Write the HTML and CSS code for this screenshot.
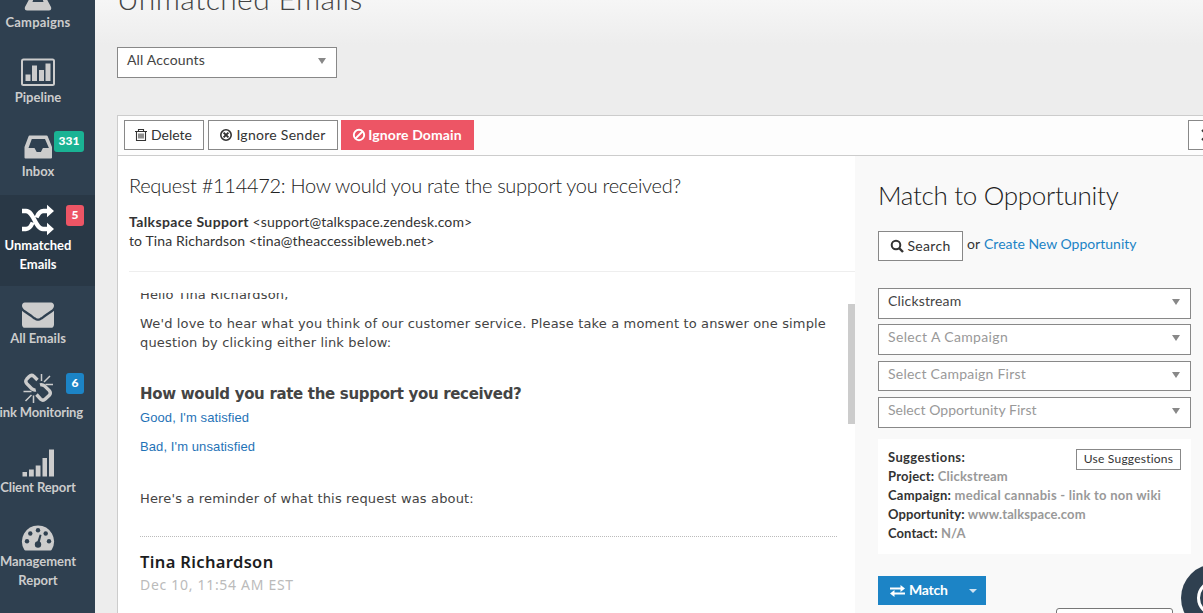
FILE: index.html
```html
<!DOCTYPE html>
<html lang="en">
<head>
<meta charset="utf-8">
<title>Unmatched Emails</title>
<link rel="stylesheet" href="styles.css">
</head>
<body>
<nav class="sidebar">
  <div class="nav-list">
    <a class="nav-item">
      <svg class="nav-icon" viewBox="0 0 34 34"><path fill-rule="evenodd" d="M12 2h10v9l8 15q1 3.500-2 3.500H6q-3 0-2-3.500l8-15zM15 9l-3.500 12h11L19 9z"/></svg>
      <span class="nav-label n1">Campaigns</span>
    </a>
    <a class="nav-item">
      <svg class="nav-icon" viewBox="0 0 34 34"><rect x="1" y="4.500" width="32" height="25.500" rx="1.500" fill="none" stroke="currentColor" stroke-width="2"/><path d="M4.500 19.500h5V26h-5zM11 10.500h5V26h-5zM18 15h5v11h-5zM24.500 8.500h5V26h-5z"/></svg>
      <span class="nav-label n2">Pipeline</span>
    </a>
    <a class="nav-item">
      <svg class="nav-icon" viewBox="0 0 34 34"><path fill-rule="evenodd" d="M8.500 5.500h17q1 0 1.300 1L31 17v10.500q0 1-1 1H4.500q-1 0-1-1V17L7.500 6.500q.3-1 1-1zM10.800 9L7.500 18h6l2.200 4h4.200l2-4h6L24 9z"/></svg>
      <span class="badge green">331</span>
      <span class="nav-label n3">Inbox</span>
    </a>
    <a class="nav-item active">
      <svg class="nav-icon" viewBox="0 0 34 34"><g fill="none" stroke="currentColor" stroke-width="4.300"><path d="M1 7h4c8 0 9 18 17 18h6M1 25h4c3.500 0 5.200-3 6.700-6.500M15.500 13.500C17 10 18.800 7 22.500 7H28"/></g><path d="M26 .8L33 7l-7 6.200zM26 18.800L33 25l-7 6.200z"/></svg>
      <span class="badge red">5</span>
      <span class="nav-label n4">Unmatched<br>Emails</span>
    </a>
    <a class="nav-item">
      <svg class="nav-icon env" viewBox="0 0 1792 1792"><path d="M1792 710v794q0 66-47 113t-113 47h-1472q-66 0-113-47t-47-113v-794q44 49 101 87 362 246 497 345 57 42 92.500 65.500t94.500 48 110 24.500h2q51 0 110-24.500t94.500-48 92.500-65.500q170-123 498-345 57-39 100-87zm0-294q0 79-49 151t-122 123q-376 261-468 325-10 7-42.500 31t-54 38.500-52 32.500-57.500 27-50 9h-2q-23 0-50-9t-57.500-27-52-32.500-54-38.500-42.500-31q-91-64-262-182.500t-205-142.500q-62-42-117-115.500t-55-136.500q0-78 41.500-130t118.500-52h1472q65 0 112.500 47t47.500 113z"/></svg>
      <span class="nav-label n5">All Emails</span>
    </a>
    <a class="nav-item">
      <svg class="nav-icon" viewBox="0 1 34 34"><g fill="none" stroke="currentColor" stroke-width="3.400"><path d="M16.500 9l-3.700-3.700q-2.300-2-4.600.2L5.800 8q-2 2.300 0 4.700l5.200 5.200q1.800 1.500 3.800.9M15.500 23.500l4.200 4.700q2.300 2 4.600-.2l4-3.700q2-2.300 0-4.700l-4.800-4.700q-2-1.700-4.500-1"/></g><g fill="none" stroke="currentColor" stroke-width="1.500"><path d="M20.500 3v7M29 5l-6 6M24.500 13.500h7.500M2.500 20.500h8M4.500 30l6-6M12.500 24.500V32"/></g></svg>
      <span class="badge blue">6</span>
      <span class="nav-label n6">Link Monitoring</span>
    </a>
    <a class="nav-item">
      <svg class="nav-icon" viewBox="0 0 34 34"><path d="M1.500 26h4.500v4.500H1.500zM8 23.500h4.800v7H8zM14.700 19.500h4.800v11h-4.800zM21.500 12h4.500v18.500h-4.500zM28 3.500h5v27h-5z"/></svg>
      <span class="nav-label n7">Client Report</span>
    </a>
    <a class="nav-item">
      <svg class="nav-icon" viewBox="0 0 34 34"><path d="M17 5.500a16 16 0 0 1 13.700 24.200q-.4.800-1.200.8h-25q-.8 0-1.200-.8A16 16 0 0 1 17 5.500z"/><g class="cut"><circle cx="17" cy="10.300" r="2.200"/><circle cx="9.300" cy="13.500" r="2.200"/><circle cx="24.700" cy="13.500" r="2.200"/><circle cx="6" cy="21.300" r="2.200"/><circle cx="28" cy="21.300" r="2.200"/><circle cx="17" cy="24.500" r="3.200"/><path d="M18.700 14.500l1.800.5-2 8-2.400-.5z"/></g></svg>
      <span class="nav-label n8">Management<br>Report</span>
    </a>
  </div>
</nav>
<main class="main">
  <h1 class="page-title"><span>Unmatched Emails</span></h1>
  <div class="select account"><span class="s0">All Accounts</span><i class="caret"></i></div>
  <section class="panel">
    <div class="toolbar">
      <button class="btn del"><svg viewBox="0 0 14 14" class="ic"><g fill="none" stroke="currentColor" stroke-width="1.100"><path d="M1 3.500h12M4.500 3.300V1.500h5v1.800M2.500 3.500v9h9v-9M5 5.500v5M7 5.500v5M9 5.500v5"/></g></svg><span class="b1">Delete</span></button>
      <button class="btn snd"><svg viewBox="0 0 14 14" class="ic"><circle cx="7" cy="7" r="5.200" fill="none" stroke="currentColor" stroke-width="1.600"/><path d="M4.600 4.600l4.800 4.800M9.400 4.600L4.600 9.400" stroke="currentColor" stroke-width="2"/></svg><span class="b2">Ignore Sender</span></button>
      <button class="btn danger"><svg viewBox="0 0 14 14" class="ic"><circle cx="7" cy="7" r="5.200" fill="none" stroke="currentColor" stroke-width="1.900"/><path d="M3.500 10.500l7-7" stroke="currentColor" stroke-width="1.800"/></svg><span class="b3">Ignore Domain</span></button>
      <button class="btn more"><svg viewBox="0 0 14 14" class="ic"><path d="M1 2l5 5-5 5M8 2l5 5-5 5" fill="none" stroke="currentColor" stroke-width="2"/></svg></button>
    </div>
    <div class="columns">
      <article class="mail">
        <header class="mail-head">
          <h2 class="subject">Request #114472: How would you rate the support you received?</h2>
          <p class="addr"><b class="a1">Talkspace Support</b> <span class="a2">&lt;support@talkspace.zendesk.com&gt;</span></p>
          <p class="addr"><span class="a3">to Tina Richardson &lt;tina@theaccessibleweb.net&gt;</span></p>
        </header>
        <div class="mail-body">
          <div class="mail-text">
            <p class="hello">Hello Tina Richardson,</p>
            <p class="love">We'd love to hear what you think of our customer service. Please take a moment to answer one simple<br>question by clicking either link below:</p>
            <h3 class="rate">How would you rate the support you received?</h3>
            <a class="vote">Good, I'm satisfied</a>
            <a class="vote second">Bad, I'm unsatisfied</a>
            <p class="remind">Here's a reminder of what this request was about:</p>
            <div class="quote">
              <p class="who">Tina Richardson</p>
              <p class="when">Dec 10, 11:54 AM EST</p>
            </div>
          </div>
          <div class="track"><div class="thumb"></div></div>
        </div>
      </article>
      <aside class="match">
        <h2 class="match-title">Match to Opportunity</h2>
        <div class="search-row"><button class="btn search"><svg viewBox="0 0 14 14" class="ic"><circle cx="6" cy="6" r="4.300" fill="none" stroke="currentColor" stroke-width="2"/><path d="M9 9l4 4" stroke="currentColor" stroke-width="2.400"/></svg><span class="b4">Search</span></button><span class="or">or</span><a class="create">Create New Opportunity</a></div>
        <div class="selects">
          <div class="select"><span class="s1">Clickstream</span><i class="caret"></i></div>
          <div class="select empty"><span class="s2">Select A Campaign</span><i class="caret"></i></div>
          <div class="select empty short"><span class="s3">Select Campaign First</span><i class="caret"></i></div>
          <div class="select empty"><span class="s4">Select Opportunity First</span><i class="caret"></i></div>
        </div>
        <div class="suggest">
          <div class="facts">
            <p class="f1">Suggestions:</p>
            <p class="f2">Project: <em>Clickstream</em></p>
            <p class="f3">Campaign: <em>medical cannabis - link to non wiki</em></p>
            <p class="f4">Opportunity: <em>www.talkspace.com</em></p>
            <p class="f5">Contact: <em>N/A</em></p>
          </div>
          <button class="use">Use Suggestions</button>
        </div>
        <div class="match-row">
          <button class="match-btn"><svg viewBox="0 0 15 12" class="swap"><path d="M0 2.500h10.500V0L15 3.500 10.500 7V4.500H0zM15 9.500H4.500V12L0 8.500 4.500 5v2.500H15z"/></svg><span class="mb">Match</span><i class="caret light"></i></button>
        </div>
        <div class="ghost"></div>
      </aside>
    </div>
  </section>
</main>
<div class="chat"><div class="chat-ring"></div></div>
</body>
</html>
```
FILE: styles.css
```css
* { box-sizing: border-box; }
body {
  margin: 0;
  width: 1203px;
  height: 613px;
  overflow: hidden;
  display: flex;
  position: relative;
  background: #ededed;
  color: #333;
  font: 14px/19px Lato, "Open Sans", sans-serif;
}
h1, h2, h3, p { margin: 0; font-weight: 400; }
button { font: inherit; color: inherit; margin: 0; }

.sidebar { width: 95px; height: 613px; flex: none; overflow: hidden; background: #2f4050; }
.nav-list { width: 114px; margin: -28px 0 0 -19px; }
.nav-item {
  display: flex;
  flex-direction: column;
  align-items: center;
  position: relative;
  height: 74.400px;
  padding-top: 9px;
  color: #ccc;
  font-size: 13px;
  font-weight: 700;
  text-align: center;
}
.nav-item.active { height: 91px; margin-bottom: 2px; background: #293846; color: #fff; }
.nav-icon { width: 34px; height: 34px; flex: none; fill: currentColor; margin-bottom: -2px; }
.nav-icon.env { width: 32px; height: 32px; margin: 1px 0 -1px; }
.cut { fill: #2f4050; }
.nav-label { white-space: nowrap; }
.n1 { letter-spacing: .18px; }
.n2 { margin-top: 1px; }
.n6 { margin-top: -1px; letter-spacing: -.15px; }
.n7 { letter-spacing: -.1px; }
.badge {
  position: absolute;
  right: 11px;
  top: 10px;
  min-width: 18px;
  height: 21px;
  padding: 0 4.500px;
  border-radius: 3px;
  color: #fff;
  font: 900 12px/20px Lato, sans-serif;
}
.green { background: #1ab394; }
.red { background: #ed5565; }
.blue { background: #1c84c6; }

.main {
  flex: 1;
  min-width: 0;
  padding-left: 22px;
  background: linear-gradient(#f6f6f6, #ededed 45px);
}
.page-title { display: flex; align-items: flex-start; height: 47px; font-size: 30px; line-height: 36px; font-weight: 300; color: #444; white-space: nowrap; letter-spacing: .4px; }
.page-title span { display: block; margin-top: -20px; }

.select {
  display: flex;
  justify-content: space-between;
  height: 31px;
  padding: 2px 9px 0;
  border: 1px solid #888;
  background: #fff;
  font-size: 14px;
  line-height: 20px;
  color: #444;
}
.select.short { height: 30px; }
.select.empty { color: #999; }
.account { width: 220px; padding-right: 10px; }
.caret { width: 0; height: 0; margin-top: 8px; border: 4px solid transparent; border-top: 6px solid #888; border-bottom: 0; }
.s0 { letter-spacing: .15px; }
.s1 { letter-spacing: .17px; }
.s2 { letter-spacing: .35px; }
.s3 { letter-spacing: .24px; }
.s4 { letter-spacing: .04px; }

.panel { margin-top: 37px; height: 498px; border: 1px solid #ccc; border-width: 1px 0 0 1px; background: #fff; }
.toolbar { display: flex; height: 40px; padding: 4px 0 0 6px; border-bottom: 1px solid #ccc; background: #fdfdfd; }
.btn {
  display: flex;
  align-items: center;
  justify-content: center;
  gap: 3px;
  flex: none;
  height: 30px;
  padding: 0;
  border: 1px solid #888;
  background: #fff;
  white-space: nowrap;
}
.btn span { margin-top: -2px; }
.ic { width: 14px; height: 14px; }
.del { width: 80px; padding-right: 2px; }
.snd { width: 130px; margin-left: 4px; padding-right: 1px; }
.danger { width: 133px; margin-left: 3px; gap: 2px; padding-right: 1px; border-color: #ed5565; background: #ed5565; color: #fff; font-weight: 700; }
.more { width: 40px; margin-left: auto; margin-right: -25px; }
.b2 { letter-spacing: .28px; }
.b3 { letter-spacing: .1px; }
.b4 { letter-spacing: .3px; }

.columns { display: flex; height: 458px; overflow: hidden; }
.mail { width: 737px; flex: none; display: flex; flex-direction: column; padding-left: 11px; }
.mail-head { height: 116px; padding-top: 17px; border-bottom: 1px solid #eee; white-space: nowrap; }
.subject { font-size: 20px; line-height: 24px; font-weight: 300; margin-bottom: 15px; letter-spacing: -.3px; color: #222; }
.a1 { letter-spacing: .38px; }
.a2 { letter-spacing: .15px; }
.a3 { letter-spacing: .12px; }
.mail-body { display: flex; justify-content: space-between; margin-top: 21px; height: 321px; overflow: hidden; }
.mail-text { width: 697px; margin-left: 11px; font: 13px/19px "DejaVu Sans", sans-serif; letter-spacing: .155px; color: #444; white-space: nowrap; }
.hello { margin-top: -8px; }
.love { margin-top: 10px; }
.rate { margin-top: 32px; font-size: 15px; line-height: 20px; font-weight: 700; letter-spacing: -.32px; color: #444; }
.vote { display: block; margin-top: 4px; font: 13px/19px "Liberation Sans", sans-serif; letter-spacing: .1px; color: #1f73b7; }
.vote.second { margin-top: 10px; }
.remind { margin-top: 33px; }
.quote { margin-top: 28px; padding-top: 15px; border-top: 1px dotted #bbb; font-family: "Noto Sans", sans-serif; }
.who { font-size: 16.500px; line-height: 20px; font-weight: 600; letter-spacing: .35px; color: #1b1d1e; }
.when { margin-top: 3px; font-size: 14px; line-height: 20px; letter-spacing: .7px; color: #bbb; }
.track { width: 7px; padding-top: 11px; }
.thumb { height: 120px; background: #ccc; }

.match { flex: 1; min-width: 0; padding: 23px 12px 0 23px; background: #f9f9f9; }
.match-title { font-size: 26px; line-height: 32px; font-weight: 300; letter-spacing: -.3px; white-space: nowrap; color: #222; }
.search-row { display: flex; align-items: flex-start; margin-top: 20px; height: 30px; line-height: 25px; white-space: nowrap; }
.search { width: 85px; line-height: 19px; margin-right: 4px; }
.or { margin-right: 4px; }
.create { color: #1c84c6; }
.selects { display: flex; flex-direction: column; gap: 6px; margin-top: 27px; }
.selects .select:nth-child(1) { margin-bottom: -1px; }
.selects .caret { margin-right: 1px; }
.suggest { display: flex; justify-content: space-between; height: 115px; margin-top: 11px; padding: 9px 10px 0; background: #fff; }
.facts { flex: none; width: 188px; font-size: 13px; white-space: nowrap; }
.facts p { font-weight: 700; }
.facts em { font-style: normal; color: #999; }
.f1 { letter-spacing: .38px; }
.f2 { letter-spacing: .2px; }
.f3 { letter-spacing: .25px; }
.f4 { letter-spacing: .11px; }
.f5 { letter-spacing: .08px; }
.use { width: 105px; height: 21px; flex: none; margin-top: 1px; padding: 0 0 2px; border: 1px solid #888; background: #fff; font-size: 12px; line-height: 17px; letter-spacing: .22px; white-space: nowrap; }
.match-row { margin-top: 22px; height: 29px; }
.match-btn { display: flex; align-items: center; width: 108px; height: 29px; padding: 0 9px 0 12px; border: 0; background: #1c84c6; color: #fff; font-weight: 700; letter-spacing: -.25px; }
.mb { margin-top: -2px; }
.swap { width: 15px; height: 12px; margin-right: 4px; fill: #fff; }
.caret.light { margin: 1px 0 0 auto; border-width: 4px 4px 0; border-top-color: #cfe3f2; }
.ghost { width: 117px; height: 20px; margin: 3px 0 0 178px; border: 1px solid #777; border-radius: 3px; background: #fff; }

.chat { position: absolute; left: 1181px; top: 564px; width: 68px; height: 68px; padding: 16px; border-radius: 50%; background: #2f4050; }
.chat-ring { width: 36px; height: 36px; border: 3px solid #fff; border-radius: 50%; }
```
